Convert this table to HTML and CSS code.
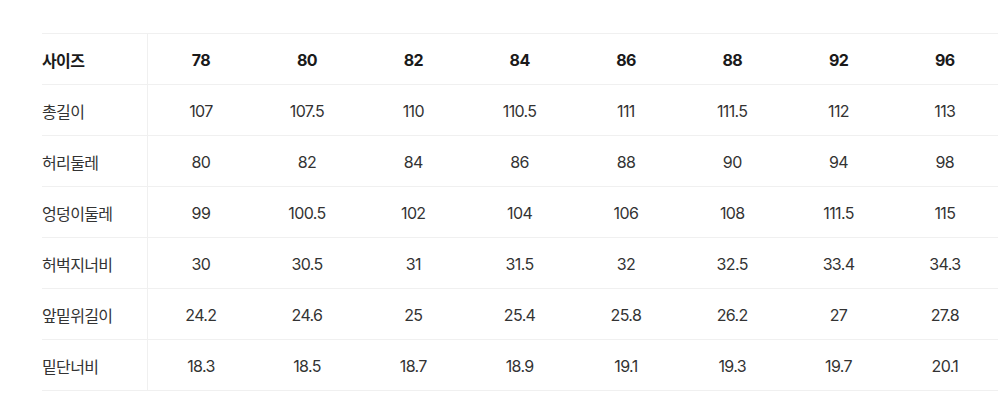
FILE: index.html
```html
<!DOCTYPE html>
<html lang="ko">
<head>
<meta charset="utf-8">
<link rel="stylesheet" href="styles.css">
</head>
<body>
<div class="wrap">
<table class="size-table">
  <thead>
    <tr><th class="label">사이즈</th><th>78</th><th>80</th><th>82</th><th>84</th><th>86</th><th>88</th><th>92</th><th>96</th></tr>
  </thead>
  <tbody>
    <tr><td class="label">총길이</td><td>107</td><td>107.5</td><td>110</td><td>110.5</td><td>111</td><td>111.5</td><td>112</td><td>113</td></tr>
    <tr><td class="label">허리둘레</td><td>80</td><td>82</td><td>84</td><td>86</td><td>88</td><td>90</td><td>94</td><td>98</td></tr>
    <tr><td class="label">엉덩이둘레</td><td>99</td><td>100.5</td><td>102</td><td>104</td><td>106</td><td>108</td><td>111.5</td><td>115</td></tr>
    <tr><td class="label">허벅지너비</td><td>30</td><td>30.5</td><td>31</td><td>31.5</td><td>32</td><td>32.5</td><td>33.4</td><td>34.3</td></tr>
    <tr><td class="label">앞밑위길이</td><td>24.2</td><td>24.6</td><td>25</td><td>25.4</td><td>25.8</td><td>26.2</td><td>27</td><td>27.8</td></tr>
    <tr><td class="label">밑단너비</td><td>18.3</td><td>18.5</td><td>18.7</td><td>18.9</td><td>19.1</td><td>19.3</td><td>19.7</td><td>20.1</td></tr>
  </tbody>
</table>
</div>
</body>
</html>
```
FILE: styles.css
```css
html, body {
  margin: 0;
  padding: 0;
  background: #fff;
}
body {
  font-family: Inter, "Noto Sans CJK KR", sans-serif;
  color: #333;
}
.wrap {
  padding: 33px 8px 0 42px;
}
.size-table {
  width: 956px;
  border-collapse: collapse;
  table-layout: fixed;
}
.size-table th,
.size-table td {
  height: 49px;
  padding: 1px 0 0;
  text-align: center;
  vertical-align: middle;
  font-size: 16px;
  letter-spacing: -0.04em;
  border-top: 1px solid #f0f0f0;
  border-bottom: 1px solid #f0f0f0;
}
.size-table th {
  font-weight: 700;
  color: #1a1a1a;
}
.size-table td {
  font-weight: 400;
  color: #333;
}
.size-table .label {
  width: 105px;
  text-align: left;
  border-right: 1px solid #f0f0f0;
}
```
